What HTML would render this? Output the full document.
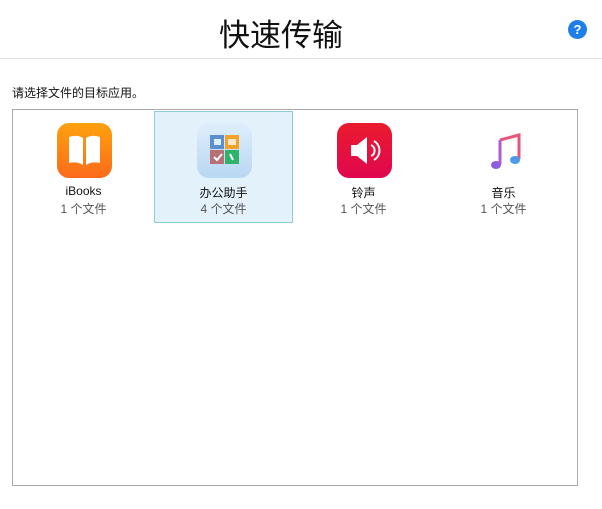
<!DOCTYPE html>
<html><head><meta charset="utf-8"><style>
body{margin:0;width:602px;height:509px;background:#fff;font-family:"Liberation Sans","Noto Sans CJK SC",sans-serif;position:relative;overflow:hidden}
.t{position:absolute;left:0;width:562px;text-align:center;top:10px;font-size:31px;color:#111}
.hl{position:absolute;left:0;right:0;top:58px;height:1px;background:#e3e3e3}
.q{position:absolute;left:568px;top:20px;width:19px;height:19px;border-radius:50%;background:#1f7fe8;color:#fff;font-size:13px;font-weight:bold;text-align:center;line-height:19px}
.p{position:absolute;left:12px;top:84px;font-size:12px;color:#111}
.box{position:absolute;left:12px;top:109px;width:564px;height:375px;border:1px solid #a9a9a9}
.it{position:absolute;top:1px;width:139px;height:112px;text-align:center;box-sizing:border-box}
.sel{background:#e3f1fb;border:1px solid #8dcbd9}
.sel .ic,.sel .n,.sel .c{margin-top:-1px;margin-left:-1px}
.ic{position:absolute;left:43px;top:12px;width:55px;height:55px;border-radius:12px}
.n{position:absolute;left:0;width:139px;top:73px;font-size:12px;color:#111}
.c{position:absolute;left:0;width:139px;top:89px;font-size:12px;color:#555}
</style></head><body>
<div class="t">快速传输</div>
<div class="q">?</div>
<div class="hl"></div>
<div class="p">请选择文件的目标应用。</div>
<div class="box">
<div class="it" style="left:1px"><div class="ic" style="background:linear-gradient(#fea20e,#fc6a1a)"><svg width="55" height="55"><path d="M12 14 Q20 11 26 15 L26 42 Q20 38 12 40Z M29 15 Q35 11 43 14 L43 40 Q35 38 29 42Z" fill="#fff"/></svg></div><div class="n">iBooks</div><div class="c">1 个文件</div></div>
<div class="it sel" style="left:141px"><div class="ic" style="background:linear-gradient(#dfeefb,#b8d7f2)"><svg width="55" height="55"><rect x="13" y="12" width="14" height="14" fill="#5c8fd0"/><rect x="28" y="12" width="14" height="14" fill="#f2a22b"/><rect x="13" y="27" width="14" height="14" fill="#b76f78"/><rect x="28" y="27" width="14" height="14" fill="#2fb36b"/><rect x="17" y="16" width="7" height="6" fill="#dfeefb"/><rect x="31" y="16" width="8" height="6" fill="#fde9c4"/><path d="M17 34l3 3 5-6" stroke="#fff" stroke-width="2" fill="none"/><path d="M33 31l3 6" stroke="#fff" stroke-width="2"/></svg></div><div class="n">办公助手</div><div class="c">4 个文件</div></div>
<div class="it" style="left:281px"><div class="ic" style="background:linear-gradient(#ea1b2d,#e0074f)"><svg width="55" height="55"><path d="M14 22h6l10-8v27l-10-8h-6z" fill="#fff"/><path d="M34 22a6 6 0 0 1 0 11M37 18a11 11 0 0 1 0 19" stroke="#fff" stroke-width="2" fill="none"/></svg></div><div class="n">铃声</div><div class="c">1 个文件</div></div>
<div class="it" style="left:421px"><div class="ic" style="background:none"><svg width="55" height="55"><path d="M23 17l19-5v24" stroke="#e8557a" stroke-width="3" fill="none"/><path d="M23 17v24" stroke="#b05bd0" stroke-width="3"/><ellipse cx="19" cy="42" rx="5" ry="4" fill="#8e5ce0"/><ellipse cx="38" cy="37" rx="5" ry="4" fill="#4c9be8"/></svg></div><div class="n">音乐</div><div class="c">1 个文件</div></div>
</div>
</body></html>
